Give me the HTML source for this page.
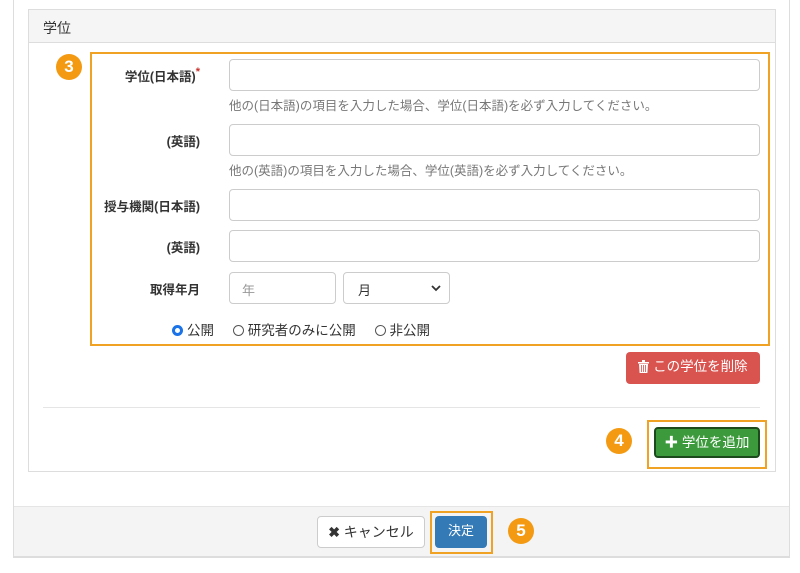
<!DOCTYPE html>
<html><head><meta charset="utf-8"><style>
*{box-sizing:border-box;margin:0;padding:0}
body{width:800px;height:573px;background:#fff;font-family:"Liberation Sans","Noto Sans CJK JP",sans-serif;font-size:13px;color:#333;position:relative;overflow:hidden}
.a{position:absolute}
.modal{left:13px;top:-2px;width:777px;height:560px;border:1px solid #ddd;border-top:none;background:#fff}
.panel{left:28px;top:9px;width:748px;height:463px;border:1px solid #ddd;background:#fff}
.ph{left:29px;top:10px;width:746px;height:33px;background:#f5f5f5;border-bottom:1px solid #ddd;padding:8px 14px;font-size:14px}
.ob{border:2px solid #f0a224}
.badge{width:26px;height:26px;border-radius:50%;background:#f39a12;color:#fff;font-weight:bold;font-size:17px;text-align:center;line-height:26px}
.lbl{font-weight:bold;text-align:right;width:120px;left:80px;font-size:12.5px}
.in{border:1px solid #ccc;border-radius:4px;background:#fff;height:32px}
.help{color:#777;font-size:12.5px;left:229px}
.btn{border-radius:4px;font-size:13px;text-align:center;line-height:30px}
.r{display:inline-block;width:11px;height:11px;border-radius:50%;border:1px solid #555;vertical-align:-1px;margin-right:4px}
</style></head><body>
<div class="a modal"></div>
<div class="a panel"></div>
<div class="a ph">学位</div>
<div class="a ob" style="left:90px;top:52px;width:680px;height:294px"></div>
<div class="a badge" style="left:56px;top:54px">3</div>

<div class="a lbl" style="top:66px">学位(日本語)<span style="color:#c9302c;font-size:11px;vertical-align:top">*</span></div>
<div class="a in" style="left:229px;top:59px;width:531px"></div>
<div class="a help" style="top:95px">他の(日本語)の項目を入力した場合、学位(日本語)を必ず入力してください。</div>

<div class="a lbl" style="top:131px">(英語)</div>
<div class="a in" style="left:229px;top:124px;width:531px"></div>
<div class="a help" style="top:160px">他の(英語)の項目を入力した場合、学位(英語)を必ず入力してください。</div>

<div class="a lbl" style="top:196px">授与機関(日本語)</div>
<div class="a in" style="left:229px;top:189px;width:531px"></div>
<div class="a lbl" style="top:237px">(英語)</div>
<div class="a in" style="left:229px;top:230px;width:531px"></div>

<div class="a lbl" style="top:279px">取得年月</div>
<div class="a in" style="left:229px;top:272px;width:107px;color:#999;padding:7px 12px">年</div>
<div class="a in" style="left:343px;top:272px;width:107px;padding:7px 14px">月<svg style="position:absolute;right:8px;top:12px" width="10" height="7" viewBox="0 0 10 7"><path d="M1 1l4 4 4-4" stroke="#333" stroke-width="1.8" fill="none"/></svg></div>

<div class="a" style="left:172px;top:319px;font-size:13.5px;white-space:nowrap">
<span class="r" style="border:3px solid #1a73e8;background:#fff"></span>公開 &nbsp;&nbsp;&nbsp;
<span class="r"></span>研究者のみに公開 &nbsp;&nbsp;&nbsp;
<span class="r"></span>非公開</div>

<div class="a btn" style="left:626px;top:352px;width:134px;height:32px;background:#d9534f;color:#fff;font-size:13.5px"><svg width="11" height="13" viewBox="0 0 11 13" style="vertical-align:-2px"><path d="M0 2h11v1.5H0zM4 0h3v2H4zM1 4h9l-.6 9H1.6z" fill="#fff"/><path d="M3.5 5v7M5.5 5v7M7.5 5v7" stroke="#d9534f" stroke-width=".8"/></svg> この学位を削除</div>
<div class="a" style="left:43px;top:407px;width:717px;height:1px;background:#e5e5e5"></div>

<div class="a badge" style="left:606px;top:428px">4</div>
<div class="a ob" style="left:647px;top:420px;width:120px;height:49px"></div>
<div class="a btn" style="left:654px;top:427px;width:106px;height:31px;background:#3c9a3c;color:#fff;border:2px solid #1d4a1d;line-height:27px;font-size:13.5px"><b>✚</b> 学位を追加</div>

<div class="a" style="left:14px;top:506px;width:775px;height:51px;background:#f4f4f4;border-top:1px solid #e5e5e5;border-bottom:1px solid #ddd"></div>
<div class="a btn" style="left:317px;top:516px;width:108px;height:32px;background:#fff;border:1px solid #ccc;font-size:14px"><b>✖</b> キャンセル</div>
<div class="a ob" style="left:430px;top:511px;width:63px;height:43px"></div>
<div class="a btn" style="left:435px;top:516px;width:52px;height:32px;background:#337ab7;color:#fff">決定</div>
<div class="a badge" style="left:508px;top:518px">5</div>
</body></html>
